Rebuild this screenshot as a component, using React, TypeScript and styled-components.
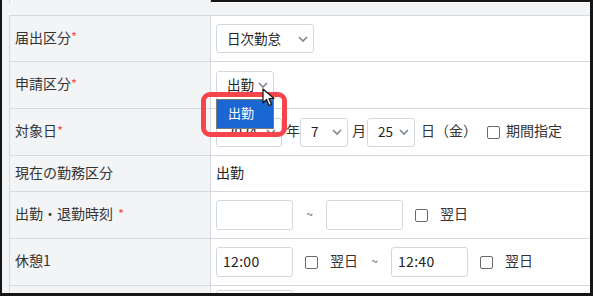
import React from 'react';
import styled, { createGlobalStyle } from 'styled-components';

const GlobalStyle = createGlobalStyle`
  html, body {
    margin: 0;
    padding: 0;
    background: #f3f4f6;
  }
  body {
    font-family: "Noto Sans CJK JP", "Noto Sans", sans-serif;
    color: #333;
  }
`;

const Frame = styled.div`
  position: relative;
  width: 593px;
  height: 296px;
  box-sizing: border-box;
  border-left: 2px solid #161616;
  border-right: 3px solid #161616;
  border-bottom: 3px solid #161616;
  background: #f3f4f6;
  overflow: hidden;
`;

const PrevRow = styled.div`
  display: grid;
  grid-template-columns: 7px 202px 1fr;
  height: 3px;
`;

const PrevLabel = styled.div`
  border-left: 1px solid #d5dae1;
  border-right: 1px solid #d5dae1;
  background: #f3f4f6;
`;

const PrevValue = styled.div`
  border-top: 2px solid #161616;
  background: #fff;
`;

const Table = styled.div`
  margin-top: 12px;
  margin-left: 7px;
  width: 620px;
  border-top: 1px solid #d5dae1;
  border-left: 1px solid #d5dae1;
`;

const Row = styled.div<{ $h: number }>`
  display: grid;
  grid-template-columns: 201px 1fr;
  height: ${({ $h }) => $h}px;
  border-bottom: 1px solid #d5dae1;
`;

const LabelCell = styled.div`
  display: flex;
  align-items: center;
  padding: 0 0 4px 5px;
  background: #f3f4f6;
  border-right: 1px solid #d5dae1;
  font-size: 14px;
  color: #333;
`;

const Req = styled.span<{ $space?: boolean }>`
  color: #ef5350;
  font-size: 13px;
  margin-left: ${({ $space }) => ($space ? '5px' : '0')};
`;

const ValueCell = styled.div<{ $top?: boolean }>`
  display: flex;
  align-items: ${({ $top }) => ($top ? 'flex-start' : 'center')};
  padding: ${({ $top }) => ($top ? '4px' : '0')} 0 0 5px;
  background: #fff;
  font-size: 14px;
`;

const Select = styled.div<{ $w: number }>`
  display: flex;
  align-items: center;
  justify-content: space-between;
  box-sizing: border-box;
  width: ${({ $w }) => $w}px;
  height: 29px;
  padding: 0 5px 2px 10px;
  border: 1px solid #d3d8df;
  border-radius: 3px;
  background: #fff;
  font-size: 13.5px;
  color: #222;
`;

const Chevron = () => (
  <svg width="10" height="6" viewBox="0 0 10 6" style={{ marginTop: 2 }}>
    <path d="M1 1 L5 5 L9 1" fill="none" stroke="#7b8390" strokeWidth="1.6" />
  </svg>
);

const Unit = styled.span<{ $l?: number; $r?: number }>`
  padding-bottom: 4px;
  margin-left: ${({ $l }) => $l ?? 0}px;
  margin-right: ${({ $r }) => $r ?? 0}px;
  font-size: 14px;
  color: #333;
`;

const Box = styled.span`
  display: inline-block;
  box-sizing: border-box;
  width: 13px;
  height: 13px;
  border: 1px solid #6b6b6b;
  border-radius: 2px;
  background: #fff;
`;

const Check = styled.label<{ $l: number; $gap?: number }>`
  display: flex;
  align-items: center;
  gap: ${({ $gap }) => $gap ?? 12}px;
  margin-left: ${({ $l }) => $l}px;
  font-size: 14px;
  color: #333;
`;

const CheckText = styled.span`
  padding-bottom: 4px;
`;

const TimeInput = styled.div`
  display: flex;
  align-items: center;
  box-sizing: border-box;
  width: 77px;
  height: 30px;
  padding: 0 0 2px 6px;
  border: 1px solid #d3d8df;
  border-radius: 3px;
  background: #fff;
  font-size: 14px;
  color: #222;
  letter-spacing: 0.3px;
`;

const Tilde = styled.span`
  width: 33px;
  padding-bottom: 3px;
  text-align: center;
  font-size: 12px;
  color: #555;
`;

const Plain = styled.span`
  padding-bottom: 4px;
  font-size: 14px;
  color: #222;
`;

const Dropdown = styled.div`
  position: absolute;
  left: 214px;
  top: 99px;
  box-sizing: border-box;
  width: 58px;
  height: 30px;
  padding: 0 0 3px 11px;
  display: flex;
  align-items: center;
  background: #1a66d2;
  border: 1px solid #7a7a7a;
  color: #fff;
  font-size: 13px;
`;

const Highlight = styled.div`
  position: absolute;
  left: 199px;
  top: 92px;
  width: 86px;
  height: 45px;
  box-sizing: border-box;
  border: 5px solid #f4444c;
  border-radius: 9px;
`;

const Cursor = styled.svg`
  position: absolute;
  left: 260px;
  top: 88px;
`;

export default function App() {
  return (
    <>
      <GlobalStyle />
      <Frame>
        <PrevRow>
          <div />
          <PrevLabel />
          <PrevValue />
        </PrevRow>
        <Table>
          <Row $h={45}>
            <LabelCell>届出区分<Req>*</Req></LabelCell>
            <ValueCell>
              <Select $w={98}>日次勤怠<Chevron /></Select>
            </ValueCell>
          </Row>
          <Row $h={46}>
            <LabelCell>申請区分<Req>*</Req></LabelCell>
            <ValueCell>
              <Select $w={58}>出勤<Chevron /></Select>
            </ValueCell>
          </Row>
          <Row $h={46}>
            <LabelCell>対象日<Req>*</Req></LabelCell>
            <ValueCell>
              <Select $w={66}>2024<Chevron /></Select>
              <Unit $l={4}>年</Unit>
              <Select $w={48}>7<Chevron /></Select>
              <Unit $l={4} $r={1}>月</Unit>
              <Select $w={48}>25<Chevron /></Select>
              <Unit $l={6}>日（金）</Unit>
              <Check $l={10} $gap={6}><Box /><CheckText>期間指定</CheckText></Check>
            </ValueCell>
          </Row>
          <Row $h={35}>
            <LabelCell>現在の勤務区分</LabelCell>
            <ValueCell>
              <Plain>出勤</Plain>
            </ValueCell>
          </Row>
          <Row $h={46}>
            <LabelCell>出勤・退勤時刻<Req $space>*</Req></LabelCell>
            <ValueCell>
              <TimeInput />
              <Tilde>~</Tilde>
              <TimeInput />
              <Check $l={12}><Box /><CheckText>翌日</CheckText></Check>
            </ValueCell>
          </Row>
          <Row $h={46}>
            <LabelCell>休憩1</LabelCell>
            <ValueCell>
              <TimeInput>12:00</TimeInput>
              <Check $l={12}><Box /><CheckText>翌日</CheckText></Check>
              <Tilde>~</Tilde>
              <TimeInput>12:40</TimeInput>
              <Check $l={12}><Box /><CheckText>翌日</CheckText></Check>
            </ValueCell>
          </Row>
          <Row $h={46}>
            <LabelCell />
            <ValueCell $top>
              <TimeInput />
            </ValueCell>
          </Row>
        </Table>
        <Dropdown>出勤</Dropdown>
        <Highlight />
        <Cursor width="14" height="20" viewBox="0 0 14 20">
          <path d="M1 1 L1 15 L4.5 11.5 L7 17.5 L9.5 16.5 L7 10.5 L12 10.5 Z" fill="#fff" stroke="#111" strokeWidth="1.2" strokeLinejoin="round" />
        </Cursor>
      </Frame>
    </>
  );
}
